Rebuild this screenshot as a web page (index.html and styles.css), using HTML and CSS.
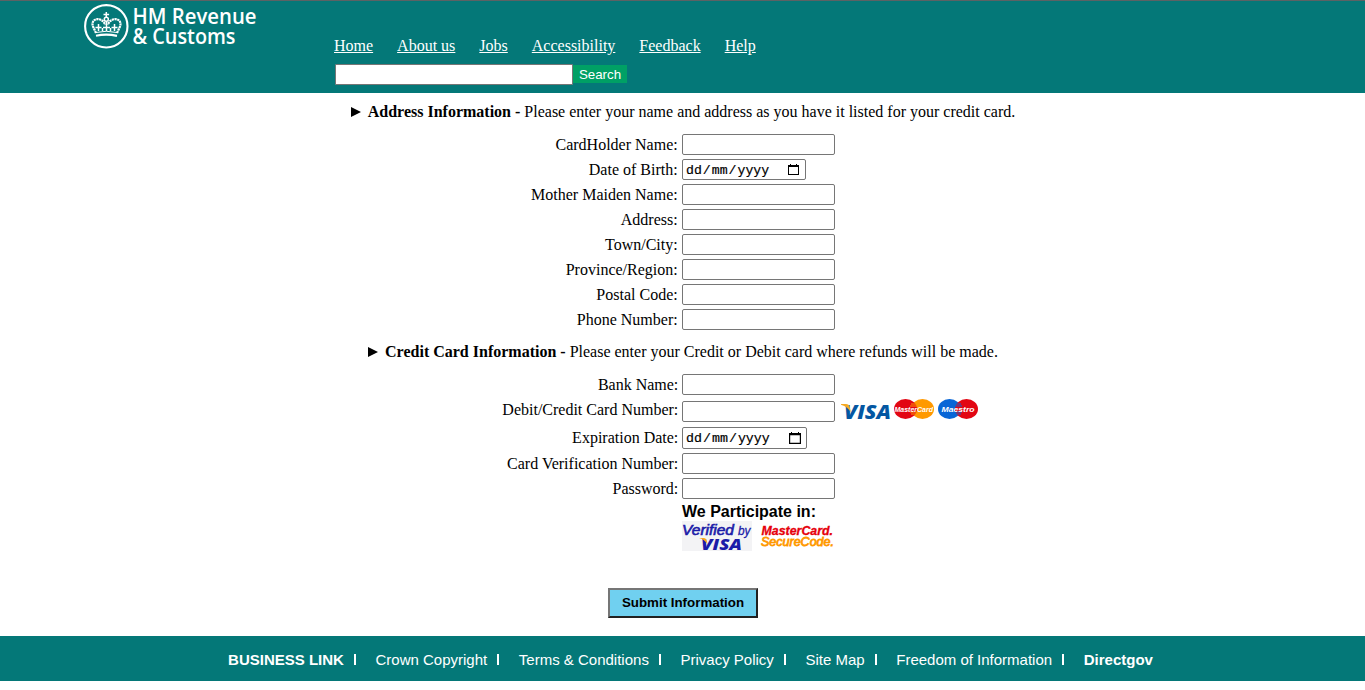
FILE: index.html
```html
<!DOCTYPE html>
<html lang="en">
<head>
<meta charset="utf-8">
<title>HM Revenue &amp; Customs</title>
<link rel="stylesheet" href="styles.css">
</head>
<body>
<header class="header">
  <svg class="logo" width="180" height="50" viewBox="0 0 180 50" role="img" aria-label="HM Revenue &amp; Customs">
    <circle cx="23.3" cy="25.3" r="21.2" fill="none" stroke="#fff" stroke-width="2.1"/>
    <g fill="none" stroke="#fff" stroke-width="1.5">
      <path d="M13 34.800Q23 32.500 34 34.800" stroke-width="2.200"/>
      <path d="M13 31.500Q23 29 34 31.500" stroke-width="1"/>
      <path d="M23.300 11V16.500M20.500 13.500H26.100"/>
      <path d="M13 32L10 25.500C7.500 18.500 15 16.500 19 19.500Q21.500 21 22 24M34 32L37 25.500C39.500 18.500 32 16.500 28 19.500Q25.500 21 25 24" stroke-width="2.200" stroke-dasharray="2.200 .5"/>
      <path d="M15.500 23V30M12.500 26.500H18.500M31.500 23V30M28.500 26.500H34.500M23.500 20V30M20 26.500H27M19.500 27V30M27.500 27V30"/>
      <circle cx="23.300" cy="18.300" r="2"/>
    </g>
    <g fill="#fff" class="logo-text">
      <text x="49.500" y="23.300" textLength="124" lengthAdjust="spacingAndGlyphs">HM Revenue</text>
      <text x="49.500" y="43.300" textLength="103" lengthAdjust="spacingAndGlyphs">&amp; Customs</text>
    </g>
  </svg>
  <div class="header-main">
    <nav class="nav">
      <a href="#">Home</a><a href="#">About us</a><a href="#">Jobs</a><a href="#">Accessibility</a><a href="#">Feedback</a><a href="#">Help</a>
    </nav>
    <form class="search"><input class="search-field" type="text" aria-label="Search"><button class="search-button" type="button">Search</button></form>
  </div>
</header>
<main>
  <h2 class="section-title first"><svg class="marker" width="10" height="10" viewBox="0 0 10 10"><path d="M0 0L10 5L0 10Z"/></svg><span><b>Address Information - </b>Please enter your name and address as you have it listed for your credit card.</span></h2>
  <div class="fields">
    <label class="row"><span>CardHolder Name:</span><input class="field" type="text"></label>
    <div class="row"><span>Date of Birth:</span><div class="field date"><span>dd</span>/<span>mm</span>/<span>yyyy</span><svg class="calendar" width="11" height="11" viewBox="0 0 11 11"><path d="M0 1H2V0H3V1H8V0H9V1H11V11H0ZM1 3V10H10V3Z" fill-rule="evenodd"/></svg></div></div>
    <label class="row"><span>Mother Maiden Name:</span><input class="field" type="text"></label>
    <label class="row"><span>Address:</span><input class="field" type="text"></label>
    <label class="row"><span>Town/City:</span><input class="field" type="text"></label>
    <label class="row"><span>Province/Region:</span><input class="field" type="text"></label>
    <label class="row"><span>Postal Code:</span><input class="field" type="text"></label>
    <label class="row"><span>Phone Number:</span><input class="field" type="text"></label>
  </div>
  <h2 class="section-title"><svg class="marker" width="10" height="10" viewBox="0 0 10 10"><path d="M0 0L10 5L0 10Z"/></svg><span><b>Credit Card Information - </b>Please enter your Credit or Debit card where refunds will be made.</span></h2>
  <div class="fields refund">
    <label class="row"><span>Bank Name:</span><input class="field" type="text"></label>
    <div class="row card-row"><span>Debit/Credit Card Number:</span><div class="card-entry"><input class="field" type="text" aria-label="Card number">
      <svg class="cards" width="140" height="22" viewBox="0 0 140 22">
        <defs><linearGradient id="gold"><stop offset="0" stop-color="#f7a51b"/><stop offset="1" stop-color="#f2ae2e"/></linearGradient></defs>
        <text class="visa" x="4" y="19.500" textLength="47" lengthAdjust="spacingAndGlyphs" font-size="20" fill="#0457a2">VISA</text>
        <path d="M1 5H6Q9 5 9.500 7.500L11 13.500Q8 8 1 5.700Z" fill="url(#gold)"/>
        <ellipse cx="82.500" cy="10" rx="11.500" ry="10" fill="#ff9900"/><ellipse cx="65.500" cy="10" rx="11.500" ry="10" fill="#e20613"/>
        <path d="M71 5H77M70 7H78M70 13H78M71 15H76" stroke="#ff9900"/>
        <text class="brand" x="54.500" y="13" textLength="38.500" lengthAdjust="spacingAndGlyphs" font-size="8">MasterCard</text>
        <ellipse cx="109.500" cy="10" rx="11.500" ry="10" fill="#0866d6"/><ellipse cx="126.500" cy="10" rx="11.500" ry="10" fill="#e20613"/>
        <path d="M115 5H121M114 7H122M114 13H122M115 15H121" stroke="#0866d6"/>
        <text class="brand" x="101.500" y="13" textLength="33" lengthAdjust="spacingAndGlyphs" font-size="8">Maestro</text>
      </svg></div></div>
    <div class="row expiry-row"><span>Expiration Date:</span><div class="field date expiry"><span>dd</span>/<span>mm</span>/<span>yyyy</span><svg class="calendar" width="12" height="12" viewBox="0 0 12 12"><path d="M0 1H2V0H3V1H9V0H10V1H12V12H0ZM1.200 3.200V10.800H10.800V3.200Z" fill-rule="evenodd"/></svg></div></div>
    <label class="row"><span>Card Verification Number:</span><input class="field" type="text"></label>
    <label class="row"><span>Password:</span><input class="field" type="text"></label>
  </div>
  <div class="participate">
    <strong>We Participate in:</strong>
    <svg class="programs" width="156" height="30" viewBox="0 0 156 30">
      <path d="M0 0H70V30H0Z" fill="#f3f3f5"/>
      <g class="brand-italic">
        <text x="0" y="14" textLength="52" lengthAdjust="spacingAndGlyphs" font-size="14" fill="#1b1ba8" stroke="#1b1ba8" stroke-width=".6">Verified</text>
        <text x="56" y="14" textLength="12.500" lengthAdjust="spacingAndGlyphs" font-size="13" fill="#1b1ba8" stroke="#1b1ba8" stroke-width=".3">by</text>
        <text class="visa" x="19" y="29" textLength="41" lengthAdjust="spacingAndGlyphs" font-size="16.500" fill="#1b1ba8">VISA</text>
        <path d="M17 17H22Q25 17 25.300 23Q22 18 17 17Z" fill="#faa61a"/>
        <text x="79.500" y="13.700" textLength="71.500" lengthAdjust="spacingAndGlyphs" font-size="12" font-weight="bold" fill="#e6000b" stroke="#e6000b" stroke-width=".3">MasterCard.</text>
        <text x="79" y="25" textLength="73" lengthAdjust="spacingAndGlyphs" font-size="12" fill="#ff9900" stroke="#ff9900" stroke-width=".8">SecureCode.</text>
      </g>
    </svg>
  </div>
  <button class="submit" type="button">Submit Information</button>
</main>
<footer class="footer">
  <a href="#"><b>BUSINESS LINK</b></a><i></i>
  <a href="#">Crown Copyright</a><i></i>
  <a href="#">Terms &amp; Conditions</a><i></i>
  <a href="#">Privacy Policy</a><i></i>
  <a href="#">Site Map</a><i></i>
  <a href="#">Freedom of Information</a><i></i>
  <a href="#"><b>Directgov</b></a>
</footer>
</body>
</html>
```
FILE: styles.css
```css
* { box-sizing: border-box; }
body { margin: 0; background: #fff; color: #000; font: 16px/18px "Liberation Serif", serif; }
.header { height: 93px; background: #047878; border-top: 1px solid #5c6264; display: flex; padding: 0 0 0 83px; }
.logo { flex: none; display: block; margin-right: 71px; }
.logo-text { font: 600 21.5px "Open Sans", sans-serif; }
.header-main { padding-top: 36px; }
.nav { display: flex; gap: 24px; }
.nav a { color: #fff; }
.search { display: flex; margin: 9px 0 0 1px; }
.search-field { width: 238px; height: 21px; border: 1px solid #767676; border-radius: 1px; padding: 1px 2px; background: #fff; }
.search-button { width: 54px; height: 18px; margin-top: 1px; padding: 2px 0 0; border: 0; background: #00a065; color: #fff; font: 13.333px/16px "Liberation Sans", sans-serif; }
.section-title { display: flex; justify-content: center; align-items: center; height: 40px; margin: 0; font-size: 16px; font-weight: normal; line-height: 18px; padding-left: 1px; }
.section-title.first { height: 39px; padding-bottom: 1px; }
.marker { margin-right: 7px; }
.row { display: grid; grid-template-columns: 677.7px auto; column-gap: 4.3px; height: 25px; align-items: center; justify-content: start; }
.refund .row { grid-template-columns: 678.3px auto; column-gap: 3.7px; }
.row > span { text-align: right; }
.field { width: 153px; height: 21px; border: 1px solid #767676; border-radius: 2px; padding: 1px 2px; background: #fff; }
.date { width: 124px; display: flex; align-items: center; font: 13.2px/15px "Liberation Mono", monospace; padding-top: 2px; -webkit-text-stroke: .2px #000; }
.row > .date > span { padding: 0 1px; }
.calendar { margin: 0 4px 2px auto; }
.refund .card-row { height: 28px; }
.card-row > span { padding-bottom: 2px; }
.card-entry { display: flex; align-items: center; }
.cards { margin: 0 0 2px 5px; overflow: visible; }
.visa { font-family: "Open Sans", sans-serif; font-style: italic; font-weight: 800; }
.brand { fill: #fff; font-family: "Liberation Sans", sans-serif; font-style: italic; font-weight: 700; }
.brand-italic { font-family: "Liberation Sans", sans-serif; font-style: italic; }
.refund .expiry-row { height: 26px; }
.expiry { width: 125px; height: 22px; font-size: 13.3px; }
.expiry .calendar { margin-right: 3px; }
.participate { display: flex; flex-direction: column; margin-left: 682px; }
.participate strong { font: bold 16px/18px "Liberation Sans", sans-serif; padding-top: 2px; }
.programs { overflow: visible; }
.submit { display: block; width: 150px; height: 30px; margin: 37px auto 18px 608px; padding: 0 0 2px; background: #70d0f0; border: 2px solid; border-color: #767676 #212121 #212121 #767676; font: bold 13.333px "Liberation Sans", sans-serif; color: #000; }
.footer { height: 45px; display: flex; justify-content: center; align-items: center; background: #047878; font: 15px/18px "Liberation Sans", sans-serif; padding: 3px 0 0 16px; }
.footer a { color: #fff; text-decoration: none; }
.footer i { width: 2px; height: 11px; margin: 0 19.6px 1px 10px; background: #fff; }
```
